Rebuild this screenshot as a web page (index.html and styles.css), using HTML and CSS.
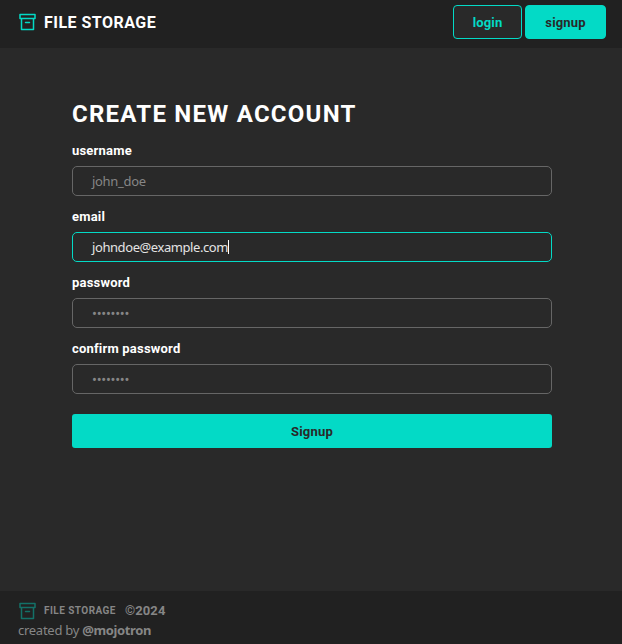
FILE: index.html
```html
<!DOCTYPE html>
<html lang="en">
<head>
<meta charset="utf-8">
<title>File Storage</title>
<link rel="stylesheet" href="styles.css">
</head>
<body>
<header class="header">
  <div class="brand">
    <svg class="logo" viewBox="0 0 18 18" fill="none" stroke="currentColor" stroke-width="1.5" stroke-linejoin="round" stroke-linecap="round"><path d="M1 1.5h15v4H1zM2.5 5.5v11h12v-11M6.5 9.5h4"/></svg>
    <span class="brand-name">FILE STORAGE</span>
  </div>
  <nav class="nav">
    <a class="button outline">login</a>
    <a class="button solid">signup</a>
  </nav>
</header>
<main class="main">
  <h1 class="title">CREATE NEW ACCOUNT</h1>
  <form class="form">
    <label class="label">username</label>
    <div class="field">john_doe</div>
    <label class="label">email</label>
    <div class="field active">johndoe@example.com<i class="caret"></i></div>
    <label class="label">password</label>
    <div class="field dots">••••••••</div>
    <label class="label">confirm password</label>
    <div class="field dots">••••••••</div>
    <div class="submit">Signup</div>
  </form>
</main>
<footer class="footer">
  <div class="footer-row">
    <svg class="logo" viewBox="0 0 18 18" fill="none" stroke="currentColor" stroke-width="1.5" stroke-linejoin="round" stroke-linecap="round"><path d="M1 1.5h15v4H1zM2.5 5.5v11h12v-11M6.5 9.5h4"/></svg>
    <span class="footer-name">FILE STORAGE</span>
    <span class="year">©2024</span>
  </div>
  <div class="credit">created by <b class="author">@mojotron</b></div>
</footer>
</body>
</html>
```
FILE: styles.css
```css
* { box-sizing: border-box; }
body { margin: 0; height: 644px; display: flex; flex-direction: column; background: #292929; color: #fff; font: 13px/20px "Noto Sans", sans-serif; }
.header { height: 48px; padding: 0 16px 4px 19px; background: #212121; display: flex; align-items: center; justify-content: space-between; }
.brand, .nav, .footer-row { display: flex; align-items: center; }
.logo { width: 18px; height: 18px; color: #03dac6; }
.brand .logo { margin-bottom: 1px; }
.brand-name { margin: 1px 0 0 7px; font: 700 16px/20px Roboto, sans-serif; letter-spacing: .48px; }
.nav { gap: 3px; }
.button { height: 34px; border: 1px solid #03dac6; border-radius: 4px; display: flex; align-items: center; justify-content: center; padding-top: 1px; font: 700 13px/20px Roboto, sans-serif; letter-spacing: .15px; }
.outline { width: 69px; background: #292929; color: #03dac6; }
.solid { width: 81px; background: #03dac6; color: #292929; }
.main { flex: 1; padding: 51px 70px 0 72px; }
.title { margin: 0; font: 700 24px/30px Roboto, sans-serif; letter-spacing: 1.25px; white-space: nowrap; }
.form { margin-top: 1px; display: flex; flex-direction: column; }
.label { margin-top: 10px; height: 26px; font: 700 13px/22px Roboto, sans-serif; letter-spacing: .2px; }
.field { height: 30px; border: 1px solid #666; border-radius: 5px; padding: 0 19px; display: flex; align-items: center; color: #868686; letter-spacing: -.3px; }
.dots { letter-spacing: -.25px; }
.active { border-color: #03dac6; color: #e4e4e4; letter-spacing: -.42px; }
.caret { width: 1px; height: 14px; background: #fff; }
.submit { margin-top: 20px; height: 34px; border-radius: 3px; background: #03dac6; color: #292929; text-align: center; font: 700 13px/35px Roboto, sans-serif; letter-spacing: .2px; }
.footer { height: 53px; padding: 10px 18px; background: #212121; color: #868686; }
.footer-row { height: 19px; }
.footer .logo { opacity: .43; margin-left: 1px; }
.footer-name { margin: 1px 0 0 7px; font: 700 10px/20px Roboto, sans-serif; letter-spacing: .45px; }
.year { margin: 1px 0 0 9px; font: 700 13px/20px Roboto, sans-serif; letter-spacing: .1px; }
.credit { letter-spacing: -.27px; }
.author { letter-spacing: -.38px; }
```
